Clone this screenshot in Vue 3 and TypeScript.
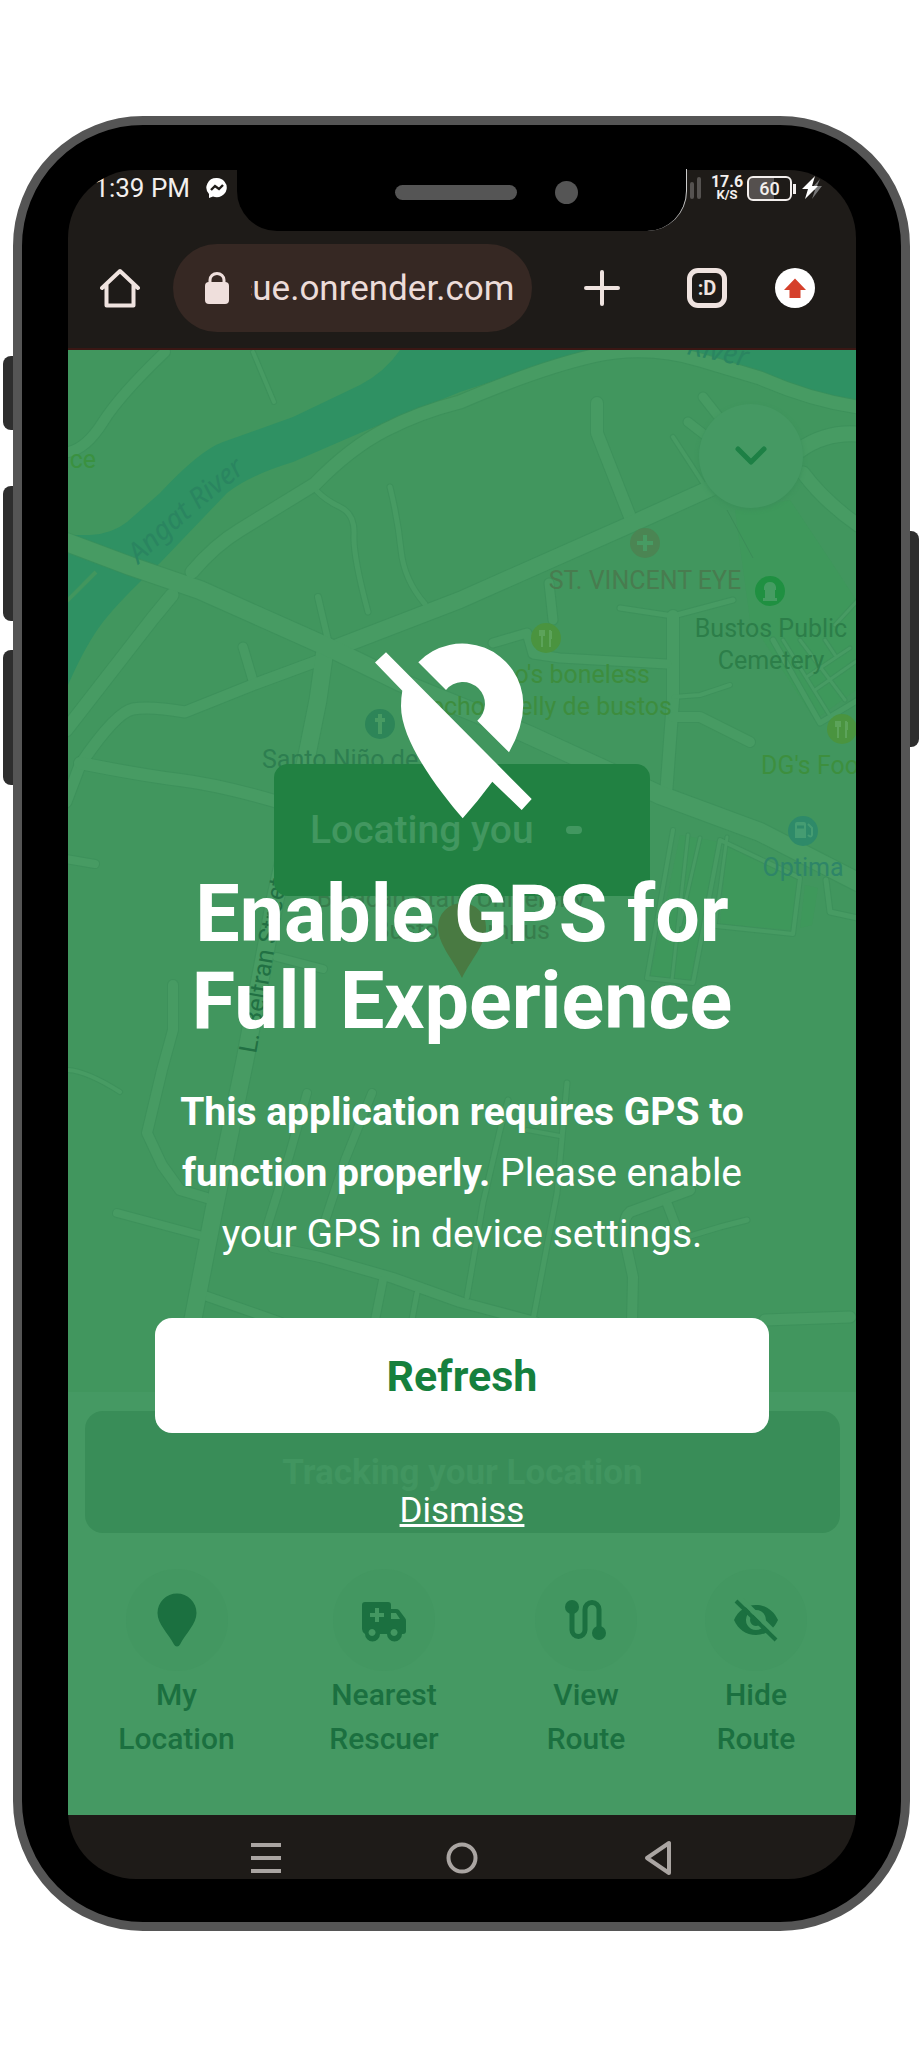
<script setup lang="ts">
import { onMounted, ref } from 'vue'

interface Road {
  w: number
  d: string
}

interface Action {
  id: 'pin' | 'ambulance' | 'route' | 'eye'
  top: string
  bottom: string
}

const address = ref('cue.onrender.com')
const addressBox = ref<HTMLInputElement | null>(null)

onMounted(() => {
  const box = addressBox.value
  if (box) box.scrollLeft = box.scrollWidth
})

const actions: Action[] = [
  { id: 'pin', top: 'My', bottom: 'Location' },
  { id: 'ambulance', top: 'Nearest', bottom: 'Rescuer' },
  { id: 'route', top: 'View', bottom: 'Route' },
  { id: 'eye', top: 'Hide', bottom: 'Route' },
]

const roads: Road[] = [
  { w: 4, d: 'M253 352L274 402' },
  { w: 10, d: 'M165 352Q120 395 103 422T68 452' },
  { w: 5, d: 'M316 490Q325 500 340 507T354 535T368 612' },
  { w: 5, d: 'M390 487Q398 520 401 550T425 604' },
  { w: 6, d: 'M318 597L328 640' },
  { w: 9, d: 'M243 647L254 684' },
  { w: 11, d: 'M320 660L255 684L185 712Q150 706 133 709T80 765L66 802' },
  { w: 12, d: 'M80 763Q140 775 180 780T278 802' },
  { w: 8, d: 'M66 859L95 864' },
  { w: 10, d: 'M173 985L173 1030L162 1070L147 1133L162 1165L180 1190L207 1198' },
  { w: 8, d: 'M277 957L323 969' },
  { w: 4, d: 'M66 1070Q85 1070 120 1092' },
  { w: 8, d: 'M117 1213L203 1236' },
  { w: 9, d: 'M203 1295L280 1322' },
  { w: 8, d: 'M307 1093L288 1160L267 1227' },
  { w: 8, d: 'M372 1093L345 1160L323 1227' },
  { w: 10, d: 'M273 1247L320 1257L393 1278L460 1302L535 1322' },
  { w: 8, d: 'M383 1280L374 1325' },
  { w: 5, d: 'M417 1293L411 1325' },
  { w: 5, d: 'M508 1100L500 1130L483 1203L467 1297' },
  { w: 5, d: 'M567 1083L557 1193L533 1320' },
  { w: 4, d: 'M527 1130L560 1136' },
  { w: 10, d: 'M690 1190L630 1212Q622 1218 625 1240L633 1277L632 1322' },
  { w: 9, d: 'M667 1203L678 1232' },
  { w: 5, d: 'M687 1237L720 1227L747 1220' },
  { w: 11, d: 'M765 1320L850 1317' },
  { w: 12, d: 'M597 403L597 433L632 522' },
  { w: 9, d: 'M703 397L718 416' },
  { w: 9, d: 'M688 422L706 436' },
  { w: 4, d: 'M673 437L703 483' },
  { w: 15, d: 'M800 450Q825 432 858 434' },
  { w: 13, d: 'M803 473Q825 502 858 525' },
  { w: 5, d: 'M620 608L673 616L733 600' },
  { w: 12, d: 'M673 616L673 700L666 795' },
  { w: 9, d: 'M549 583L553 620' },
  { w: 9, d: 'M493 643L527 633L533 654L560 658L667 664' },
  { w: 4, d: 'M673 697L700 695L730 685' },
  { w: 10, d: 'M673 717L700 717L750 742' },
  { w: 5, d: 'M773 640L820 723L858 700' },
  { w: 3, d: 'M783 640L830 716M800 640L845 700M815 690L858 660M808 676L850 648M825 640L835 655M835 625L858 600' },
  { w: 4, d: 'M673 830L647 978L693 983L720 840L800 878L793 934L716 926' },
  { w: 3, d: 'M688 835L672 980M700 838L680 925M727 837L715 926' },
  { w: 5, d: 'M826 880L830 912L858 918' },
  { w: 13, d: 'M66 730L153 618L172 595' },
  { w: 13, d: 'M192 572Q215 545 240 530L315 484Q350 448 385 430T460 402Q540 368 593 356T700 360L760 378Q810 400 858 407' },
  { w: 17, d: 'M325 650L318 700L302 780L275 900L245 1060L214 1210L188 1345' },
  { w: 16, d: 'M330 650L460 600L627 526L720 484' },
  { w: 18, d: 'M66 542L130 566L200 590L330 648L400 682L527 734L660 795L760 832L858 882' },
]

</script>

<template>
  <div class="page">
    <div class="phone">
      <span class="key key-mute"></span>
      <span class="key key-up"></span>
      <span class="key key-down"></span>
      <span class="key key-power"></span>

      <div class="notch">
        <span class="speaker"></span>
        <span class="camera"></span>
      </div>

      <div class="screen">
        <header class="chrome">
          <div class="status">
            <div class="status-left">
              <span class="time">1:39 PM</span>
              <svg class="messenger" viewBox="0 0 22 22" aria-hidden="true">
                <path fill="#fff" d="M11 1a10 9.6 0 1 1-4 18.5L3 21V17A10 9.6 0 0 1 11 1z" />
                <path fill="none" stroke="#1e1b18" stroke-width="2.4" d="M5 13l4-4 4 3 4-4" />
              </svg>
            </div>
            <div class="status-right">
              <svg class="signal" viewBox="0 0 12 26" aria-hidden="true">
                <path stroke="#555250" stroke-width="4" stroke-linecap="round" d="M2 9v13M9 4v18" />
              </svg>
              <span class="speed"><span>17.6</span><span class="unit">K/S</span></span>
              <span class="battery">60</span>
              <svg class="bolt" viewBox="0 0 20 24" aria-hidden="true">
                <path fill="#777" d="M18 3L8 14h5l-3 9 10-13h-5z" />
                <path fill="#fff" d="M13 0L0 13h6L3 23 16 10h-6z" />
              </svg>
            </div>
          </div>

          <div class="toolbar">
            <button class="tool" type="button" aria-label="Home">
              <svg class="icon40" viewBox="0 0 40 40" fill="none" stroke="#efe3df" stroke-width="4" stroke-linejoin="round" stroke-linecap="round">
                <path d="M2 20L20 3l18 17M6.500 17v20.500h27V17" />
              </svg>
            </button>
            <label class="address">
              <svg class="lock" viewBox="0 0 24 32" aria-hidden="true">
                <rect y="10" width="24" height="22" rx="4" fill="#efdfdc" />
                <path fill="none" stroke="#efdfdc" stroke-width="3" d="M5 12V8a7 6.500 0 0 1 14 0v4" />
              </svg>
              <input ref="addressBox" v-model="address" type="text" aria-label="Address" />
            </label>
            <button class="tool tool-plus" type="button" aria-label="New tab">
              <svg class="icon40" viewBox="0 0 40 40" stroke="#efe3df" stroke-width="4" stroke-linecap="round">
                <path d="M20 4v32M4 20h32" />
              </svg>
            </button>
            <button class="tabs" type="button">:D</button>
            <button class="tool" type="button" aria-label="Update available">
              <svg class="icon40" viewBox="0 0 40 40">
                <circle cx="20" cy="20" r="20" fill="#fff" />
                <path fill="#d5402b" d="M20 10.500L31 22H25.500V30h-11v-8H9z" />
              </svg>
            </button>
          </div>
        </header>

        <main class="app">
          <svg class="map" viewBox="68 350 788 1465" preserveAspectRatio="xMidYMin slice" aria-label="Map">
            <defs>
              <path id="river-line" d="M139 564Q186 518 262 458" />
            </defs>
            <rect x="68" y="350" width="788" height="1465" fill="#41965e" />
            <path fill="#3c9958" d="M735 510L790 500L830 560L856 600V690L815 720L750 620zM680 835L720 842L690 980L650 978zM727 842L800 880L793 930L720 924zM805 885L818 888L812 925L800 928z" opacity=".5" />
            <path fill="#2f9163" d="M68 535H90Q112 534 127 522L160 493Q200 450 223 442L293 417L360 385Q385 372 400 350H620Q540 365 460 392L360 433L293 462Q250 475 227 493L160 563Q120 600 103 622T68 685zM680 350Q760 388 856 404V350z" />
            <path d="M66 602L96 572" stroke="#41965e" stroke-width="4" />
            <g fill="none" stroke-linecap="round" stroke-linejoin="round">
              <path v-for="(road, i) in roads" :key="'e' + i" :d="road.d" :stroke-width="road.w + 2" stroke="#3c8f5a" opacity=".7" />
              <path v-for="(road, i) in roads" :key="'r' + i" :d="road.d" :stroke-width="road.w" stroke="#479b63" />
            </g>
            <path d="M727 510L753 558" stroke="#3b8d58" stroke-width="1" />

            <circle cx="645" cy="543" r="15" fill="#4b8553" />
            <path d="M645 535v16M637 543h16" stroke="#479b63" stroke-width="4" />
            <circle cx="770" cy="591" r="15" fill="#1f9041" />
            <path fill="#459c62" d="M763 601v-3h2v-8h-1v-3q1-5 6-5t6 5v3h-1v8h2v3z" />
            <circle cx="546" cy="638" r="15" fill="#4a943f" />
            <path d="M542 630v6M540 630v5h4v-5M542 636v11M550 630v17M551 631v8" fill="none" stroke="#5ca35a" stroke-width="2" />
            <circle cx="842" cy="729" r="15" fill="#4a943f" />
            <path d="M838 721v6M836 721v5h4v-5M838 727v11M846 721v17M847 722v8" fill="none" stroke="#5ca35a" stroke-width="2" />
            <circle cx="803" cy="831" r="15" fill="#2e8a69" />
            <path fill="#459c72" d="M795 824q0-2 2-2h7q2 0 2 2v14h-11z" />
            <path d="M797 827h7" stroke="#2e8a69" stroke-width="3" />
            <path d="M808 824l4 4v7q-1 3-4 0" fill="none" stroke="#459c72" stroke-width="2" />
            <circle cx="380" cy="724" r="15" fill="#2d8558" />
            <path d="M380 714v20M375 720h10" stroke="#479b63" stroke-width="4" />

            <g class="poi">
              <text x="645" y="589" text-anchor="middle" fill="#487c4f">ST. VINCENT EYE</text>
              <text x="771" y="637" text-anchor="middle" fill="#2c7e49">Bustos Public</text>
              <text x="771" y="669" text-anchor="middle" fill="#2c7e49">Cemetery</text>
              <text x="650" y="683" text-anchor="end" fill="#3d8d3e">o's boneless</text>
              <text x="672" y="715" text-anchor="end" fill="#3d8d3e">echon belly de bustos</text>
              <text x="262" y="768" fill="#2d7e50">Santo Niño de</text>
              <text x="761" y="774" fill="#3d8f3e">DG's Food</text>
              <text x="803" y="876" text-anchor="middle" fill="#2e8568">Optima</text>
              <text x="451" y="907" text-anchor="middle" fill="#377d4c">Bulacan State University</text>
              <text x="462" y="939" text-anchor="middle" fill="#377d4c">Bustos Campus</text>
              <text x="96" y="468" text-anchor="end" fill="#3a9140">ace</text>
              <text transform="translate(256 1054) rotate(-80)" fill="#217043">L. Beltran Street</text>
            </g>
            <text class="water"><textPath href="#river-line">Angat River</textPath></text>
            <text class="water" transform="translate(686 354) rotate(12)">River</text>
            <path fill="#497a42" d="M462 978C452 958 438 944 438 927a24 24 0 0 1 48 0C486 944 472 958 462 978z" />
          </svg>

          <button class="collapse" type="button" aria-label="Collapse">
            <svg viewBox="0 0 32 20" fill="none" stroke="#1d8045" stroke-width="5" stroke-linecap="round" stroke-linejoin="round">
              <path d="M3 3l13 13L29 3" />
            </svg>
          </button>

          <div class="toast"><span>Locating you</span><span class="dash"></span></div>

          <section class="panel">
            <button class="tracking" type="button">Tracking your Location</button>
            <div class="actions">
              <button v-for="a in actions" :key="a.id" class="action" type="button">
                <span class="disc">
                  <svg v-if="a.id === 'pin'" class="glyph-pin" viewBox="0 0 40 54">
                    <path d="M20 53.500q-2 0-3-2C11 40 .5 31 .5 20a19.500 19.500 0 0 1 39 0C39.500 31 29 40 23 51.500q-1 2-3 2z" />
                  </svg>
                  <svg v-else-if="a.id === 'ambulance'" class="glyph" viewBox="0 0 44 44">
                    <path fill-rule="evenodd" d="M3 4h23q3 0 3 3v4h5q2 0 3 1l6 8q1 1 1 3v10q0 3-3 3h-1a7.500 7.500 0 0 1-15 0h-7a7.500 7.500 0 0 1-15 0Q0 34 0 31V7q0-3 3-3zM13 10v5H8v4h5v5h4v-5h5v-4h-5v-5zM29 15v6h9l-4-6zM10 31a3.500 3.500 0 1 0 .1 0zM32 31a3.500 3.500 0 1 0 .1 0z" />
                  </svg>
                  <svg v-else-if="a.id === 'route'" class="glyph" viewBox="0 0 44 44">
                    <circle cx="8" cy="9" r="7" />
                    <circle cx="35" cy="35" r="7" />
                    <path fill="none" stroke="#1b7040" stroke-width="5" d="M8 9v23a6.500 6.500 0 0 0 13 0V11.500a7 7 0 0 1 14 0V35" />
                  </svg>
                  <svg v-else class="glyph" viewBox="0 0 44 44">
                    <path fill-rule="evenodd" d="M22 7C12 7 4 13 0 22c4 9 12 15 22 15s18-6 22-15C40 13 32 7 22 7zM22 12a10 10 0 1 1-.1 0zM22 16a6 6 0 1 0 .1 0z" />
                    <path stroke="#439761" stroke-width="5" d="M6 0l40 40" />
                    <path stroke="#1b7040" stroke-width="4" d="M2 3l40 39" />
                  </svg>
                </span>
                <span class="caption">{{ a.top }}<br />{{ a.bottom }}</span>
              </button>
            </div>
          </section>

          <section class="overlay" role="dialog" aria-labelledby="gps-title">
            <svg class="gps" viewBox="370 643 184 176" aria-hidden="true">
              <path fill="#fff" d="M375 662.500L386 652.300L531.700 799L521.700 810L492.300 781.700Q478 801 462.700 818.300C440 792 401 742 401 706Q401 698 402.300 690.700z" />
              <path fill="#fff" d="M418.300 662.300A61 61 0 0 1 523.300 704Q523.300 727 509 752.300L477.300 720.700A22 22 0 1 0 446 690z" />
            </svg>
            <h1 id="gps-title">Enable GPS for Full Experience</h1>
            <p><strong>This application requires GPS to function properly.</strong> Please enable your GPS in device settings.</p>
            <button class="refresh" type="button">Refresh</button>
            <a class="dismiss" href="#">Dismiss</a>
          </section>
        </main>

        <nav class="navbar">
          <button type="button" aria-label="Recent apps">
            <svg viewBox="0 0 40 40" stroke="#aaa5a2" stroke-width="4"><path d="M5 6h30M5 19h30M5 32h30" /></svg>
          </button>
          <button type="button" aria-label="Home screen">
            <svg viewBox="0 0 40 40" fill="none" stroke="#aaa5a2" stroke-width="4"><circle cx="20" cy="19" r="13.500" /></svg>
          </button>
          <button type="button" aria-label="Back">
            <svg viewBox="0 0 40 40" fill="none" stroke="#aaa5a2" stroke-width="4" stroke-linejoin="round"><path d="M31 4v30L9 19z" /></svg>
          </button>
        </nav>
      </div>
    </div>
  </div>
</template>

<style>
body {
  margin: 0;
  background: #fff;
}
</style>

<style scoped>
.page {
  padding: 116px 11px 117px 13px;
  font-family: Roboto, 'Liberation Sans', sans-serif;
}
button {
  margin: 0;
  padding: 0;
  border: 0;
  background: none;
  font: inherit;
  color: inherit;
  cursor: pointer;
}
svg {
  display: block;
}
.phone {
  position: relative;
  border: 9px solid #555;
  border-radius: 130px;
  background: #000;
  padding: 45px 45px 43px 46px;
}
.key {
  position: absolute;
  width: 10px;
  background: #2e2e2e;
}
.key-mute,
.key-up,
.key-down {
  left: -19px;
  border-radius: 8px 0 0 8px;
}
.key-mute {
  top: 231px;
  height: 74px;
}
.key-up {
  top: 361px;
  height: 135px;
}
.key-down {
  top: 525px;
  height: 135px;
}
.key-power {
  right: -18px;
  top: 406px;
  width: 9px;
  height: 216px;
  border-radius: 0 8px 8px 0;
}
.notch {
  position: absolute;
  z-index: 2;
  top: 44px;
  left: 50%;
  width: 450px;
  height: 62px;
  margin-left: -225px;
  box-sizing: border-box;
  border-right: 1px solid #ccc;
  border-radius: 0 0 40px 40px;
  background: #000;
}
.speaker {
  position: absolute;
  left: 158px;
  top: 16px;
  width: 122px;
  height: 15px;
  border-radius: 8px;
  background: #555;
}
.camera {
  position: absolute;
  left: 318px;
  top: 12px;
  width: 23px;
  height: 23px;
  border-radius: 50%;
  background: #555;
}
.screen {
  display: flex;
  flex-direction: column;
  overflow: hidden;
  border-radius: 68px;
  background: #1e1b18;
}
.chrome {
  border-bottom: 2px solid #3a1714;
}
.status {
  display: flex;
  justify-content: space-between;
  height: 36px;
  color: #f3efed;
}
.status-left,
.status-right {
  display: flex;
  align-items: center;
}
.status-left {
  gap: 16px;
}
.time {
  width: 122px;
  text-align: right;
  font-size: 26px;
  line-height: 36px;
}
.messenger {
  width: 22px;
  height: 22px;
}
.status-right {
  padding-right: 34px;
}
.signal {
  width: 12px;
  height: 26px;
  margin-right: 10px;
}
.speed {
  display: flex;
  flex-direction: column;
  align-items: center;
  width: 30px;
  font-size: 16px;
  font-weight: 700;
  line-height: 13px;
}
.unit {
  font-size: 13px;
}
.battery {
  position: relative;
  box-sizing: border-box;
  width: 45px;
  height: 25px;
  margin: 0 10px 0 5px;
  border: 2px solid #f3efed;
  border-radius: 6px;
  background: linear-gradient(90deg, #55504e 60%, #1e1b18 60%);
  font-size: 18px;
  font-weight: 500;
  line-height: 21px;
  text-align: center;
}
.battery::after {
  content: '';
  position: absolute;
  right: -6px;
  top: 6px;
  width: 3px;
  height: 10px;
  background: #f3efed;
}
.bolt {
  width: 20px;
  height: 24px;
}
.toolbar {
  display: flex;
  align-items: center;
  padding: 38px 41px 16px 32px;
}
.icon40 {
  width: 40px;
  height: 40px;
}
.address {
  flex: 1;
  display: flex;
  align-items: center;
  min-width: 0;
  height: 88px;
  margin: 0 50px 0 33px;
  padding: 0 18px 0 32px;
  box-sizing: border-box;
  border-radius: 44px;
  background: #362823;
}
.lock {
  flex: none;
  width: 24px;
  height: 32px;
}
.address input {
  flex: 1;
  min-width: 0;
  margin-left: 22px;
  padding: 2px 0 0;
  border: 0;
  outline: 0;
  background: none;
  color: #ecdcd9;
  font: 35px/44px Roboto, 'Liberation Sans', sans-serif;
}
.tabs {
  box-sizing: border-box;
  width: 40px;
  height: 40px;
  margin: 0 48px 0 65px;
  border: 5px solid #efe3df;
  border-radius: 11px;
  color: #efe3df;
  font-size: 20px;
  font-weight: 700;
  line-height: 28px;
}
.app {
  position: relative;
  display: grid;
  background: #41965e;
}
.map {
  position: absolute;
  inset: 0;
  width: 100%;
  height: 100%;
}
.poi {
  font: 25px Roboto, 'Liberation Sans', sans-serif;
}
.water {
  font: italic 28px 'Noto Sans', sans-serif;
  fill: #2a8560;
}
.collapse {
  position: absolute;
  top: 54px;
  right: 53px;
  display: grid;
  place-items: center;
  width: 104px;
  height: 104px;
  border-radius: 50%;
  background: #459963;
  box-shadow: 0 2px 4px #3c905a;
}
.collapse svg {
  width: 32px;
  height: 20px;
}
.toast {
  position: absolute;
  top: 414px;
  left: 50%;
  display: flex;
  align-items: center;
  gap: 32px;
  box-sizing: border-box;
  width: 376px;
  height: 132px;
  margin-left: -188px;
  padding-left: 36px;
  border-radius: 14px;
  background: #218142;
  color: #429760;
  font-size: 39px;
  font-weight: 500;
}
.dash {
  width: 16px;
  height: 8px;
  border-radius: 4px;
  background: #429760;
}
.panel,
.overlay {
  grid-area: 1 / 1;
}
.panel {
  position: relative;
  align-self: end;
  padding: 19px 16px 54px 17px;
  background: #459963;
}
.tracking {
  display: block;
  width: 100%;
  height: 122px;
  border-radius: 18px;
  background: #398d58;
  color: #419560;
  font-size: 35px;
  font-weight: 700;
}
.actions {
  display: grid;
  grid-template-columns: 183fr 232fr 172fr 168fr;
  padding-top: 36px;
}
.action {
  display: flex;
  flex-direction: column;
  align-items: center;
  gap: 2px;
  color: #1b7040;
}
.disc {
  display: grid;
  place-items: center;
  width: 102px;
  height: 102px;
  border-radius: 50%;
  background: #439761;
  fill: #1b7040;
}
.glyph {
  width: 44px;
  height: 44px;
}
.glyph-pin {
  width: 40px;
  height: 54px;
}
.caption {
  font-size: 30px;
  font-weight: 500;
  line-height: 44px;
}
.overlay {
  position: relative;
  display: flex;
  flex-direction: column;
  align-items: center;
  padding: 293px 87px 284px;
  color: #fff;
  text-align: center;
}
.gps {
  width: 184px;
  height: 176px;
}
h1 {
  margin: 52px 0 0;
  font-size: 79px;
  font-weight: 700;
  line-height: 87px;
}
p {
  margin: 37px 0 53px;
  font-size: 39px;
  line-height: 61px;
}
.refresh {
  width: 100%;
  height: 115px;
  border-radius: 17px;
  background: #fff;
  color: #15803d;
  font-size: 43px;
  font-weight: 700;
}
.dismiss {
  margin-top: 58px;
  color: #fff;
  font-size: 35px;
  line-height: 40px;
  text-decoration: underline;
  text-decoration-thickness: 3px;
}
.navbar {
  display: flex;
  justify-content: center;
  gap: 156px;
  height: 64px;
}
.navbar button {
  width: 40px;
}
.navbar svg {
  width: 40px;
  height: 40px;
  margin-top: 24px;
}
</style>
